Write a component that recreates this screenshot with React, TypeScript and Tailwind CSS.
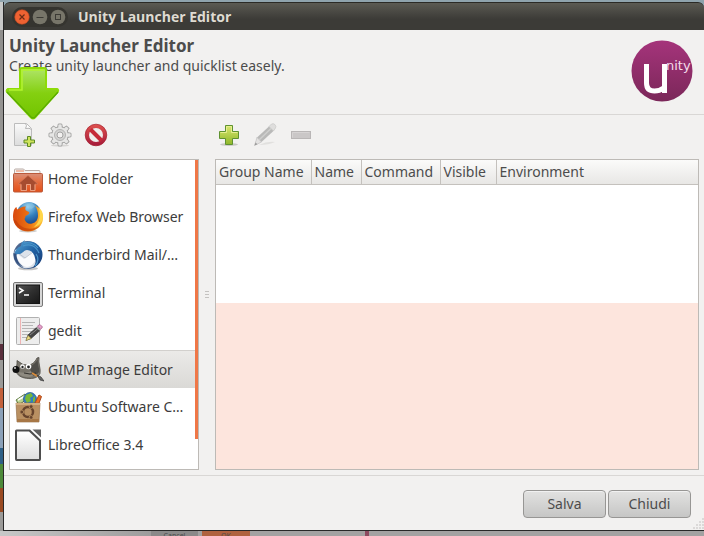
import React, { useState } from "react";

interface LauncherEntry {
  name: string;
  icon: () => React.ReactElement;
}

function HomeFolderIcon() {
  return (
    <svg viewBox="0 0 32 32" className="h-8 w-8 shrink-0">
      <defs>
        <linearGradient id="folder" x1="0" y1="0" x2="0" y2="1">
          <stop offset="0" stopColor="#d9907a" />
          <stop offset=".5" stopColor="#e66a3a" />
          <stop offset="1" stopColor="#e2501b" />
        </linearGradient>
      </defs>
      <path d="M2.5 10V7q0-1 1-1h8l1.500 1.500h14q1 0 1 1V12h-26z" fill="#f4f2f0" stroke="#b9aaa4" />
      <path d="M4 8h8" stroke="#e8835c" />
      <rect x="1.500" y="10.500" width="29" height="18.500" rx="1" fill="url(#folder)" stroke="#bb5a3b" />
      <path d="M16 12.500l10 8.500h-3v6.500h-4.500v-6h-4v6H9V21H6z" fill="#a64c30" stroke="#d97958" strokeWidth=".7" />
      <path d="M9 21.500v6h5.500v-6h4v6H23v-6" fill="none" stroke="#f2ad90" strokeWidth=".8" />
    </svg>
  );
}

function FirefoxIcon() {
  return (
    <svg viewBox="0 0 32 32" className="h-8 w-8 shrink-0">
      <defs>
        <radialGradient id="ffGlobe" cx=".45" cy=".2" r=".8">
          <stop offset="0" stopColor="#9bd2ef" />
          <stop offset=".5" stopColor="#3480bd" />
          <stop offset="1" stopColor="#173d83" />
        </radialGradient>
        <linearGradient id="ffTail" x1="0" y1="0" x2="1" y2="0">
          <stop offset="0" stopColor="#d9480f" />
          <stop offset=".6" stopColor="#ee7812" />
          <stop offset="1" stopColor="#ffc83a" />
        </linearGradient>
      </defs>
      <ellipse cx="16" cy="30" rx="9" ry="1.500" fill="#9b9b9b" opacity=".5" />
      <circle cx="17" cy="13" r="12" fill="url(#ffGlobe)" />
      <path
        d="M2 9c1-2 2-3 2.500-3 0 1 .5 2 1 2.500C8 7 11 5 14 5.500c-1 1.500-1 3 0 4l3 1.500c.8 1-.5 2.800-3.500 4 0 2-1 2-1 3 1 3.500 4 5.500 7.500 4.500 4-1 6-4 6-8 0-4-1-7-3-10C28 7 31 12 31 17c0 8-7 13.500-15 13.500S1 24.500 1 16c0-3 .3-5 1-7z"
        fill="url(#ffTail)"
      />
      <path d="M26 6c3 6 3 14-4 20 5-1 9-6 9-11 0-4-2-7-5-9z" fill="#ffd64a" />
      <path d="M1.500 18c1 7 7 12 14 12 6 0 10-2 13-6-6 5-18 6-24-4z" fill="#b93808" opacity=".55" />
      <path d="M15 3l5-1 3 3-2 2-2 1-4-4z" fill="#8fcbe7" opacity=".5" />
    </svg>
  );
}

function ThunderbirdIcon() {
  return (
    <svg viewBox="0 0 32 32" className="h-8 w-8 shrink-0">
      <defs>
        <linearGradient id="bird" x1="0" y1="0" x2="1" y2="1">
          <stop offset="0" stopColor="#5aa8d8" />
          <stop offset=".5" stopColor="#2163a5" />
          <stop offset="1" stopColor="#17356f" />
        </linearGradient>
      </defs>
      <ellipse cx="16" cy="29.500" rx="10" ry="1.800" fill="#8b8b8b" opacity=".5" />
      <circle cx="15.500" cy="16" r="14" fill="#4c6791" />
      <path d="M3 11c-2 7 2 15 9 18 6 1 11-1 14-6l-2-12-9-4z" fill="#dce2ea" />
      <path d="M4 14l8 6 10-9 2 9c-2 5-6 8-9 8-6-1-10-7-11-14z" fill="#fafbfd" />
      <path d="M6 14l7 5 8-6" fill="none" stroke="#b2bac7" strokeWidth=".8" />
      <path
        d="M9 7c0-3 2-5 4-6l-1 2c8-2 15 1 18 9 2 7-2 14-9 17 3-4 3-7 2-10-1-5-4-8-8-8-3 0-4 3-7 4-2 0-4 0-5 2-1-4 1-8 6-10z"
        fill="url(#bird)"
      />
      <path d="M11 7c7-3 13 0 16 7M12 4c6-1 10 0 14 5M24 15c3 4 2 9-1 12" fill="none" stroke="#4b96cb" strokeWidth="1.200" />
      <path d="M1.500 14c0 7 4 12 10 14-4-3-7-7-7-13z" fill="#34517f" />
    </svg>
  );
}

function TerminalIcon() {
  return (
    <svg viewBox="0 0 32 32" className="h-8 w-8 shrink-0">
      <defs>
        <linearGradient id="screen" x1="0" y1="0" x2="1" y2="1">
          <stop offset="0" stopColor="#555" />
          <stop offset=".5" stopColor="#303030" />
          <stop offset="1" stopColor="#171717" />
        </linearGradient>
      </defs>
      <rect x="1.500" y="5.500" width="29" height="24" rx="1.500" fill="#d6d6d6" stroke="#777" />
      <rect x="4.500" y="8" width="23" height="18.500" fill="url(#screen)" stroke="#151515" />
      <path d="M7 11l4 2.500L7 16" fill="none" stroke="#fff" strokeWidth="1.500" />
      <path d="M12 18h5" stroke="#fff" strokeWidth="1.500" />
      <path d="M3 29.500h26" stroke="#888" />
    </svg>
  );
}

function GeditIcon() {
  return (
    <svg viewBox="0 0 32 32" className="h-8 w-8 shrink-0">
      <rect x="4.500" y="2.500" width="23" height="27" rx="1" fill="#ededed" stroke="#b0b0b0" />
      <path d="M8.500 3v26" stroke="#efb3b3" />
      <path d="M10 7.500h13M10 10.500h11M10 13.500h13M10 16.500h10M10 19.500h7M10 22.500h6" stroke="#b5b5b5" />
      <path d="M14 25.500l2-5.500 9-8 3 3.500-9 8z" fill="#454545" stroke="#333" strokeWidth=".7" />
      <path d="M18 20l8-6.500" stroke="#888" />
      <path d="M14 25.500l2-5 3 3z" fill="#eddc86" stroke="#a49342" strokeWidth=".5" />
      <path d="M25.500 11l2.500-1.500 2.500 2.500-2 2.500z" fill="#e7a2ca" stroke="#a45d8c" strokeWidth=".8" />
      <path d="M24.500 12l3.500 3.500" stroke="#ddd" />
    </svg>
  );
}

function GimpIcon() {
  return (
    <svg viewBox="0 0 32 32" className="h-8 w-8 shrink-0">
      <path d="M5 10V6.500l6 4 5 .5c4 0 7-3 9-7l2-.5c-1 6 2 11 1 16-2 4-6 5-10 5-5 0-10-1-13-5l-1-5z" fill="#77736a" stroke="#4b4942" strokeWidth=".8" />
      <path d="M18 12c4-1 6-4 8-7-1 5 2 10 1 13-2 3-5 4-8 3z" fill="#4f4d48" />
      <path d="M6 18c5 1 9 1 13-1l2 5c-5 2-11 1-14-2z" fill="#8e8a80" />
      <circle cx="10.500" cy="12.500" r="2.300" fill="#fff" />
      <circle cx="16.500" cy="12.500" r="2.800" fill="#fff" />
      <circle cx="10.500" cy="13" r="1.200" fill="#222" />
      <circle cx="16.500" cy="13" r="1.400" fill="#222" />
      <circle cx="4" cy="15.500" r="3.500" fill="#101010" />
      <circle cx="3" cy="14" r="1" fill="#ccc" />
      <path d="M12 19q6 2 12 0" fill="none" stroke="#33312d" />
      <path d="M20 19l6 3.500" stroke="#d88b3b" strokeWidth="1.800" />
      <path d="M25 21l4 2 3 4-4-1z" fill="#666" stroke="#333" strokeWidth=".7" />
    </svg>
  );
}

function SoftwareCenterIcon() {
  return (
    <svg viewBox="0 0 32 32" className="h-8 w-8 shrink-0">
      <path d="M4 9l9-6 3 4-9 7z" fill="#b8d18d" stroke="#607c43" />
      <path d="M6 9l7-4" stroke="#fff" strokeWidth="1.500" />
      <circle cx="18" cy="8" r="6.500" fill="#327cc2" stroke="#225082" strokeWidth=".7" />
      <path d="M14 4l5-2 2 3-3 2 1 3-4 2-2-4zM21 7l2-2v5l-2 2z" fill="#79b837" />
      <path d="M23 12l4-8 2.500 1.500-3 8z" fill="#ee6d25" stroke="#a94819" />
      <path d="M4 12h24l-1 19H5z" fill="#b99062" stroke="#8b653e" strokeWidth=".6" />
      <path d="M4 12h24v2H4z" fill="#d1ad80" />
      <path d="M5 28h22v3H5z" fill="#a77746" />
      <circle cx="16" cy="21" r="5" fill="none" stroke="#67442d" strokeWidth="2.500" />
      <g fill="#67442d" stroke="#b99062" strokeWidth=".8">
        <circle cx="9.800" cy="21" r="1.900" />
        <circle cx="19.100" cy="15.600" r="1.900" />
        <circle cx="19.100" cy="26.400" r="1.900" />
      </g>
    </svg>
  );
}

function LibreOfficeIcon() {
  return (
    <svg viewBox="0 0 32 32" className="h-8 w-8 shrink-0">
      <defs>
        <linearGradient id="sheet" x1="0" y1="0" x2="0" y2="1">
          <stop offset="0" stopColor="#fff" />
          <stop offset="1" stopColor="#dedede" />
        </linearGradient>
      </defs>
      <path d="M4.500 0.500h13.500L29 11v19q0 2-1.500 2h-23Q3 32 3 30V2Q3 .5 4.500 .5z" fill="#4d4d4d" />
      <path d="M5 2.500h12l10 9.500v18H5z" fill="url(#sheet)" />
      <path d="M20.500 .5h8.500v8z" fill="#5f5f5f" />
    </svg>
  );
}

const launchers: LauncherEntry[] = [
  { name: "Home Folder", icon: HomeFolderIcon },
  { name: "Firefox Web Browser", icon: FirefoxIcon },
  { name: "Thunderbird Mail/…", icon: ThunderbirdIcon },
  { name: "Terminal", icon: TerminalIcon },
  { name: "gedit", icon: GeditIcon },
  { name: "GIMP Image Editor", icon: GimpIcon },
  { name: "Ubuntu Software C…", icon: SoftwareCenterIcon },
  { name: "LibreOffice 3.4", icon: LibreOfficeIcon },
];

const columns = [
  { title: "Group Name", width: "w-[95px]" },
  { title: "Name", width: "w-[50px]" },
  { title: "Command", width: "w-[79px]" },
  { title: "Visible", width: "w-[56px]" },
  { title: "Environment", width: "" },
];

const gearTeeth = [0, 45, 90, 135, 180, 225, 270, 315];

function NewLauncherIcon() {
  return (
    <svg viewBox="0 0 24 24" className="h-6 w-6">
      <defs>
        <linearGradient id="page" x1="0" y1="0" x2="0" y2="1">
          <stop offset="0" stopColor="#fafafa" />
          <stop offset="1" stopColor="#dcdcdc" />
        </linearGradient>
      </defs>
      <path d="M2.500 .5h12l5 5v17h-17z" fill="url(#page)" stroke="#bcbcbc" />
      <path d="M13.500 .5q2 2 0 5 4-1 6 1" fill="#fff" stroke="#b5b5b5" />
      <path d="M15.500 13.500h3v3.500h4v3h-4v3.500h-3V20h-3.500v-3h3.500z" fill="#d0e45c" stroke="#5d8a25" />
    </svg>
  );
}

function GearIcon() {
  return (
    <svg viewBox="0 0 24 24" className="h-6 w-6">
      <ellipse cx="12" cy="22.500" rx="9" ry="1" fill="#d6d5d3" />
      <g fill="#e6e6e5" stroke="#a3a3a2">
        {gearTeeth.map((angle) => (
          <path key={angle} d="M9.500 5l.8-4h3.400l.8 4z" transform={`rotate(${angle} 12 12)`} />
        ))}
        <circle cx="12" cy="12" r="8.300" />
      </g>
      <g fill="#e6e6e5">
        {gearTeeth.map((angle) => (
          <path key={angle} d="M10 6l.8-4.300h2.400L14 6z" transform={`rotate(${angle} 12 12)`} />
        ))}
      </g>
      <circle cx="12" cy="12" r="5.500" fill="#d4d4d3" stroke="#b4b4b3" />
      <circle cx="12" cy="12" r="3" fill="#f2f1f0" stroke="#a3a3a2" />
    </svg>
  );
}

function ForbiddenIcon() {
  return (
    <svg viewBox="0 0 24 24" className="h-6 w-6">
      <defs>
        <linearGradient id="ban" x1="0" y1="0" x2="0" y2="1">
          <stop offset="0" stopColor="#e0524e" />
          <stop offset="1" stopColor="#a51a3b" />
        </linearGradient>
      </defs>
      <circle cx="12" cy="12" r="10.800" fill="url(#ban)" stroke="#a51f2c" strokeWidth=".7" />
      <circle cx="12" cy="12" r="7" fill="#eeeeec" />
      <path d="M6.500 6.500l11 11" stroke="#c52b38" strokeWidth="4" />
    </svg>
  );
}

function PlusIcon() {
  return (
    <svg viewBox="0 0 24 24" className="h-6 w-6">
      <defs>
        <linearGradient id="plus" x1="0" y1="0" x2="0" y2="1">
          <stop offset="0" stopColor="#dbe86f" />
          <stop offset="1" stopColor="#8fb62a" />
        </linearGradient>
      </defs>
      <ellipse cx="12" cy="21.500" rx="9" ry="1.500" fill="#c9c8c4" />
      <path d="M8.500 2.500h7v6h6v7h-6v6h-7v-6h-6v-7h6z" fill="url(#plus)" stroke="#5f9230" />
      <path d="M3.500 9.500h6v-6h5v6h6" fill="none" stroke="#e6ee90" />
    </svg>
  );
}

function PencilIcon() {
  return (
    <svg viewBox="0 0 24 24" className="h-6 w-6">
      <path d="M6 22q8-4 16-3-6 3-16 3z" fill="#e1e0de" />
      <path d="M1.500 22.500l2.500-8L16.500 3l4.500 4.500L8.500 19z" fill="#b9b9b8" />
      <path d="M6 17L18.500 5" stroke="#cfcfce" strokeWidth="1.500" />
      <path d="M1.500 22.500l2.500-8 4.500 4.500z" fill="#e3e2e1" stroke="#c6c5c4" strokeWidth=".6" />
      <path d="M1.500 22.500l1-3 2 1.800z" fill="#9b9b9a" />
      <path d="M16 3.500L18.500 1q2-1 3.500.7t.5 3.300L20.500 8z" fill="#dfdedd" stroke="#c9c8c7" strokeWidth=".7" />
    </svg>
  );
}

function MinusIcon() {
  return (
    <svg viewBox="0 0 24 24" className="h-6 w-6">
      <rect x="2.500" y="8.500" width="19" height="7" fill="#cac7c7" stroke="#b9b6b6" />
      <path d="M3.500 14.500v-5h17" fill="none" stroke="#d6d3d3" />
    </svg>
  );
}

function ToolButton({ label, children }: { label: string; children: React.ReactNode }) {
  return (
    <button aria-label={label} className="h-6 w-6">
      {children}
    </button>
  );
}

function TitleBar() {
  return (
    <header className="flex h-7 items-center rounded-t-md border-t border-[#2b2a26] bg-linear-to-b from-[#5b5a53] to-[#3c3b37] to-60% pl-2">
      <div className="flex h-5 items-center gap-0.5 rounded-full bg-[#35342f] px-0.5">
        <button aria-label="Close" className="h-4 w-4">
          <svg viewBox="0 0 16 16" className="h-4 w-4">
            <circle cx="8" cy="8" r="7.300" fill="#ef6232" stroke="#b84420" strokeWidth=".6" />
            <path d="M5.500 5.500l5 5M10.500 5.500l-5 5" stroke="#6b2c15" strokeWidth="1.200" />
          </svg>
        </button>
        <button aria-label="Minimize" className="h-4 w-4">
          <svg viewBox="0 0 16 16" className="h-4 w-4">
            <circle cx="8" cy="8" r="7.300" fill="#777569" />
            <path d="M4.500 8.500h7" stroke="#3b3a35" />
          </svg>
        </button>
        <button aria-label="Maximize" className="h-4 w-4">
          <svg viewBox="0 0 16 16" className="h-4 w-4">
            <circle cx="8" cy="8" r="7.300" fill="#777569" />
            <rect x="5.500" y="5.500" width="5" height="5" fill="none" stroke="#3b3a35" />
          </svg>
        </button>
      </div>
      <span className="ml-2.5 font-['Open_Sans',sans-serif] font-bold text-[#dfdbd2]">Unity Launcher Editor</span>
    </header>
  );
}

function UnityLogo() {
  return (
    <div className="relative h-16 w-16 shrink-0">
      <svg viewBox="0 0 64 64" className="h-16 w-16">
        <defs>
          <linearGradient id="unity" x1="0" y1="0" x2="0" y2="1">
            <stop offset="0" stopColor="#a5347b" />
            <stop offset="1" stopColor="#7b2759" />
          </linearGradient>
        </defs>
        <circle cx="32" cy="33" r="30.500" fill="url(#unity)" />
        <path d="M16.500 26v19q0 8 8 8 5 0 9-3M34.500 26v29" fill="none" stroke="#fff" strokeWidth="5" />
      </svg>
      <span className="absolute top-[18px] left-9 font-['DejaVu_Sans',sans-serif] text-[13px] leading-5 text-[#f4dcea]">nity</span>
    </div>
  );
}

function DownArrow() {
  return (
    <svg viewBox="0 0 56 56" className="absolute top-9 -left-1 h-14 w-14">
      <defs>
        <linearGradient id="arrow" x1="0" y1="0" x2="0" y2="1">
          <stop offset="0" stopColor="#b0e56a" />
          <stop offset=".5" stopColor="#84d010" />
          <stop offset="1" stopColor="#72c400" />
        </linearGradient>
      </defs>
      <path d="M17 2h22q2 0 2 2v19h11q2 1 .5 3L30 51.500q-2 2-4 0L2 26q-1-2 1-3h12V4q0-2 2-2z" fill="url(#arrow)" stroke="#8edb08" strokeWidth="2" />
      <path d="M53 26L30 51q-2 2-4 0L2 26" fill="none" stroke="#5aab03" strokeWidth="1.500" />
      <path d="M4 24h13V4h22" fill="none" stroke="#b3f52b" strokeWidth="1.500" />
    </svg>
  );
}

// slice of the windows behind, visible left of the frame
function BackdropLeft() {
  return (
    <div className="flex w-[3px] shrink-0 flex-col bg-[#9b9a98]" aria-hidden="true">
      <div className="h-7 bg-[#c9c9c8]" />
      <div className="h-[314px] bg-linear-to-b from-[#8f8e8c] to-[#a4a3a1]" />
      <div className="h-4 bg-[#5a2f3c]" />
      <div className="h-7 bg-[#9b9a98]" />
      <div className="h-5 bg-[#c4603a]" />
      <div className="h-10 bg-[#8ba0b8]" />
      <div className="h-4 bg-[#2e5f86]" />
      <div className="h-6 bg-[#4d8a3a]" />
      <div className="h-6 bg-[#9a4a22]" />
    </div>
  );
}

function BackdropBottom() {
  return (
    <div className="flex h-[5px] overflow-hidden bg-[#a3a2a2] text-[7px] leading-[9px]" aria-hidden="true">
      <span className="w-[151px] shrink-0 bg-linear-to-r from-[#c8c8c8] to-[#9d9c9c]" />
      <span className="w-[47px] shrink-0 bg-[#8a8989] text-center">Cancel</span>
      <span className="w-1 shrink-0" />
      <span className="w-12 shrink-0 bg-[#b0623f] text-center">OK</span>
      <span className="w-[115px] shrink-0" />
      <span className="w-1 shrink-0 bg-[#8c4a5f]" />
    </div>
  );
}

export default function App() {
  const [selected, setSelected] = useState("GIMP Image Editor");

  return (
    <div className="flex min-h-screen flex-col overflow-hidden bg-[#8fa3ad] pt-0.5 font-['Noto_Sans','Open_Sans',sans-serif] text-[14px] leading-5 text-[#4c4c4c]">
      <div className="flex grow">
        <BackdropLeft />
        <div className="flex min-w-0 grow flex-col border-b border-l border-[#282828]">
          <TitleBar />
          <main className="relative flex grow flex-col bg-[#f2f1f0]">
            <section className="flex h-[85px] items-start justify-between border-b border-[#d9d7d5] pr-2.5 pl-[5px]">
              <div className="relative pt-1.5">
                <h1 className="text-[17px] leading-5 font-bold">Unity Launcher Editor</h1>
                <p>Create unity launcher and quicklist easely.</p>
                <DownArrow />
              </div>
              <div className="pt-2">
                <UnityLogo />
              </div>
            </section>

            <div className="flex h-11 items-center pb-1 pl-2">
              <div className="flex w-[205px] gap-3">
                <ToolButton label="New launcher"><NewLauncherIcon /></ToolButton>
                <ToolButton label="Launcher settings"><GearIcon /></ToolButton>
                <ToolButton label="Delete launcher"><ForbiddenIcon /></ToolButton>
              </div>
              <div className="flex gap-3">
                <ToolButton label="Add group"><PlusIcon /></ToolButton>
                <ToolButton label="Edit group"><PencilIcon /></ToolButton>
                <ToolButton label="Remove group"><MinusIcon /></ToolButton>
              </div>
            </div>

            <div className="flex grow pr-[5px] pl-[5px]">
              {/* Launcher list */}
              <div className="flex w-[190px] shrink-0 border border-[#bdbab6] bg-white text-[#3c3c3c]">
                <ul className="min-w-0 grow">
                  {launchers.map(({ name, icon: Icon }) => (
                    <li key={name}>
                      <button
                        onClick={() => setSelected(name)}
                        className={`flex h-[38px] w-full items-center gap-1 pl-0.5 text-left ${
                          selected === name ? "border-t border-[#d2d0cd] bg-linear-to-b from-[#ebeae8] to-[#dad9d6]" : ""
                        }`}
                      >
                        <Icon />
                        <span className="whitespace-nowrap">{name}</span>
                      </button>
                    </li>
                  ))}
                </ul>
                <div className="mb-[30px] w-[3px] shrink-0 bg-[#ef7747]" />
              </div>

              {/* Pane handle */}
              <div className="flex w-4 shrink-0 flex-col items-center justify-center gap-0.5 pb-10">
                <span className="h-px w-1 bg-[#c4c2c0]" />
                <span className="h-px w-1 bg-[#c4c2c0]" />
                <span className="h-px w-1 bg-[#c4c2c0]" />
              </div>

              {/* Quicklist groups */}
              <div className="flex min-w-0 grow flex-col border border-[#bdbab6] bg-[#fde5dd]">
                <table className="w-full table-fixed border-collapse">
                  <thead>
                    <tr className="h-6 bg-linear-to-b from-[#fbfbfa] to-[#e8e7e5]">
                      {columns.map(({ title, width }) => (
                        <th
                          key={title}
                          className={`border-r border-b border-[#c4c1bd] p-0 pl-[3px] text-left font-normal last:border-r-0 ${width}`}
                        >
                          {title}
                        </th>
                      ))}
                    </tr>
                  </thead>
                  <tbody>
                    <tr className="h-[119px] bg-white">
                      <td colSpan={5} />
                    </tr>
                  </tbody>
                </table>
              </div>
            </div>

            <footer className="mt-[5px] flex h-[55px] items-start justify-end gap-0.5 border-t border-[#d9d7d5] pt-3.5 pr-[13px]">
              <button className="h-7 w-[83px] rounded border border-[#979694] bg-linear-to-b from-[#e2e2e1] to-[#c6c6c5] shadow-[inset_0_1px_0_#f1f1f1]">
                Salva
              </button>
              <button className="h-7 w-[83px] rounded border border-[#979694] bg-linear-to-b from-[#e2e2e1] to-[#c6c6c5] shadow-[inset_0_1px_0_#f1f1f1]">
                Chiudi
              </button>
            </footer>
            <svg viewBox="0 0 12 12" className="absolute right-0 bottom-0 h-3 w-3">
              <path
                d="M10 1h2M7 4h2M10 4h2M4 7h2M7 7h2M10 7h2M1 10h2M4 10h2M7 10h2M10 10h2"
                stroke="#d3d1cf"
                strokeWidth="1.500"
              />
            </svg>
          </main>
        </div>
      </div>
      <BackdropBottom />
    </div>
  );
}
